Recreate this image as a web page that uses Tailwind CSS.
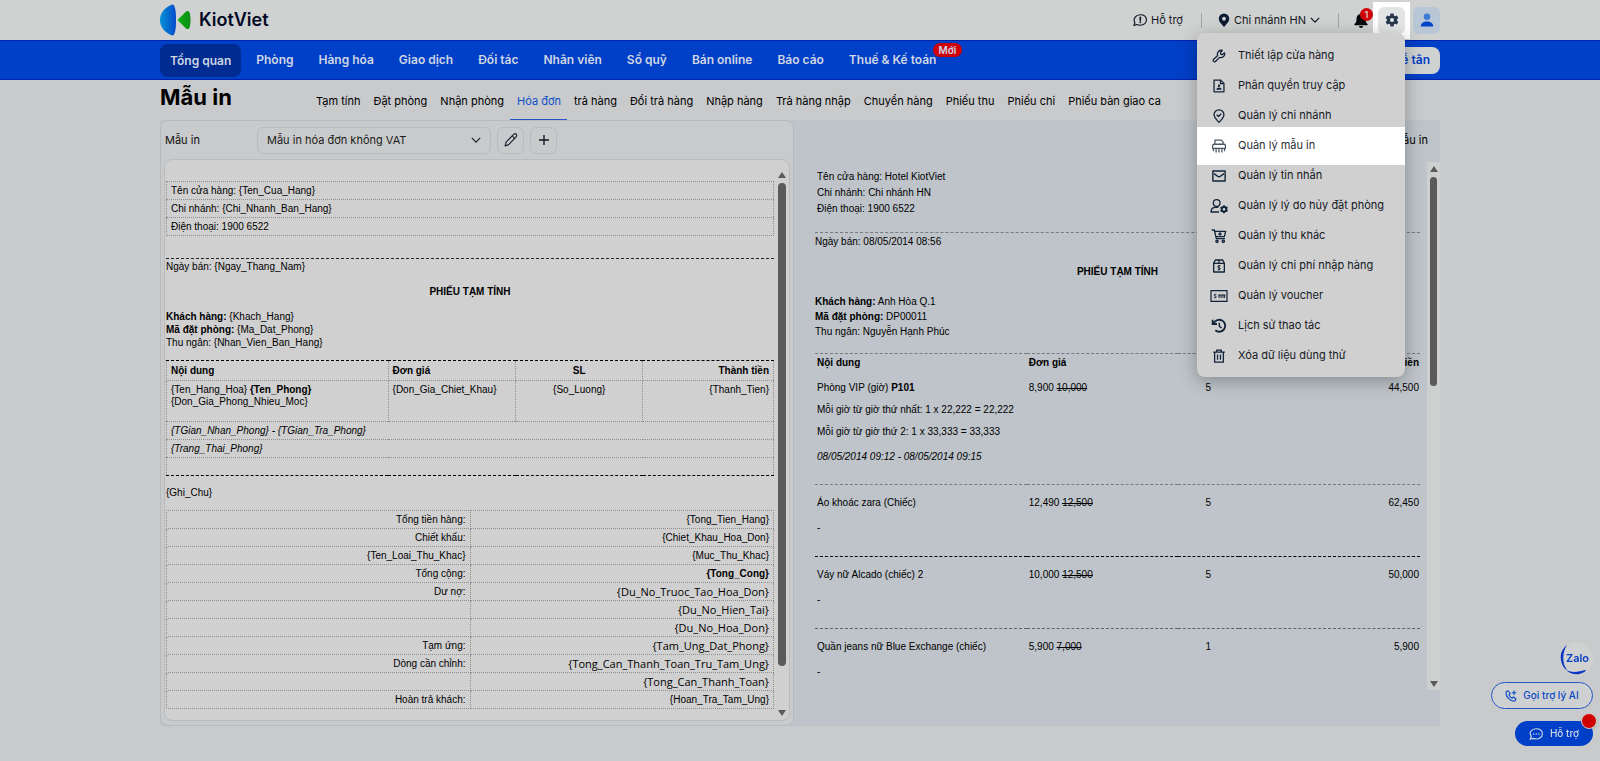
<!DOCTYPE html>
<html lang="vi">
<head>
    <meta charset="UTF-8">
    <meta name="viewport" content="width=device-width, initial-scale=1.0">
    <title>KiotViet - Mẫu in</title>
    <script src="https://cdn.jsdelivr.net/npm/@tailwindcss/browser@4"></script>
</head>
<body class="min-h-screen bg-[#c9cacc] text-black text-[11px] [font-family:Inter,sans-serif]">

    <!-- Header -->
    <header class="bg-[#d0d1d1]">
        <div class="w-4/5 mx-auto h-10 flex items-center justify-between text-[#101822]">
            <a href="#" class="flex items-center gap-[7px] text-lg font-semibold text-[#030a26]">
                <svg class="w-8 h-8" viewBox="0 0 32 32">
                    <defs>
                        <linearGradient id="blue" x1="0" x2="1"><stop offset="0" stop-color="#0793d6"/><stop offset="1" stop-color="#0548cc"/></linearGradient>
                        <linearGradient id="green" x1="0" x2="1"><stop offset="0" stop-color="#0cae12"/><stop offset="1" stop-color="#0b8f14"/></linearGradient>
                    </defs>
                    <path d="M11 1C4 4 0 9.500 0 16s4 12 11 15c2 1 3 0 3.500-1.500C16 26 16 21 16 16s0-10-1.500-13.500C14 1 13 0 11 1z" fill="url(#blue)"/>
                    <path d="M18.500 15L25 8.500c2-2 4-2 4.500 0 .8 2 1 4.500 1 7.500s-.2 5.500-1 7.500c-.5 2-2.500 2-4.500 0L18.500 17c-.7-.7-.7-1.300 0-2z" fill="url(#green)"/>
                </svg>
                KiotViet
            </a>
            <div class="flex items-center">
                <a href="#" class="flex items-center gap-1">
                    <svg class="w-[14px] h-[14px]" viewBox="0 0 24 24" fill="none" stroke="currentColor" stroke-width="2" stroke-linecap="round" stroke-linejoin="round"><path d="M1.500 21.500l1.800-4.500C-.5 9.500 5 3 12.500 3S23 7.500 23 12s-4 9-10.500 9c-2 0-4-.5-5.500-1.300z"/><path d="M12.500 7.500v4.500M12.500 15.500v.5" stroke-width="3"/></svg>
                    Hỗ trợ
                </a>
                <span class="w-px h-[15px] bg-[#a3a5a7] ml-[18px] mr-4"></span>
                <button class="flex items-center gap-1">
                    <svg class="w-3 h-[14px] text-[#0b1b30]" viewBox="2 0 20 24" fill="currentColor" fill-rule="evenodd"><path d="M12 1a9 9 0 0 0-9 9c0 4.500 3.500 8 9 14 5.500-6 9-9.500 9-14a9 9 0 0 0-9-9zm0 5.500a3.300 3.300 0 1 1 0 6.600 3.300 3.300 0 0 1 0-6.600z"/></svg>
                    Chi nhánh HN
                    <svg class="w-[10px] h-[10px]" viewBox="0 0 24 24" fill="none" stroke="currentColor" stroke-width="3"><path d="M2 7l10 10L22 7"/></svg>
                </button>
                <span class="w-px h-[15px] bg-[#a3a5a7] ml-[18px] mr-[15px]"></span>
                <button class="relative" aria-label="Thông báo">
                    <svg class="w-[14px] h-4 text-[#06080c]" viewBox="0 0 14 16" fill="currentColor"><path d="M7 1a1 1 0 0 0-1 1.100C3.700 2.600 2.500 4.500 2.500 7c0 2.500-.5 3.500-2 5-.5.600-.2 1.200.5 1.200h12c.700 0 1-.600.500-1.200-1.500-1.500-2-2.500-2-5 0-2.500-1.200-4.400-3.500-4.900A1 1 0 0 0 7 1zM5 14a2 2 0 0 0 4 0z"/></svg>
                    <span class="absolute -top-1 left-[6px] w-[13px] h-[13px] rounded-full bg-[#cf0008] text-[#e0d0d0] text-[9px] leading-[13px] font-semibold text-center">1</span>
                </button>
                <div class="relative ml-[10px] mr-2">
                    <div class="absolute -inset-[5px] bg-white"></div>
                    <button class="relative w-[27px] h-[27px] rounded-md bg-[#e2e4e5] flex items-center justify-center text-[#26384b]" aria-label="Thiết lập">
                        <svg class="w-[14px] h-[14px]" viewBox="0 0 24 24" fill="currentColor" fill-rule="evenodd"><path d="M9.500 1h5l.7 3.200 2 1.200 3.200-1 2.500 4.300L20.500 11v2l2.400 2.300-2.500 4.300-3.200-1-2 1.200-.7 3.200h-5l-.7-3.200-2-1.200-3.200 1-2.500-4.300L3.500 13v-2L1.100 8.700l2.500-4.300 3.200 1 2-1.200zM12 8.500a3.500 3.500 0 1 0 0 7 3.500 3.500 0 0 0 0-7z"/></svg>
                    </button>

                    <!-- Settings menu -->
                    <div class="absolute z-10 right-0 top-[26px] w-[208px] pt-2 pb-[6px] rounded-lg bg-[#d0d0d0] shadow-[0_4px_18px_rgba(0,0,0,0.3)] text-[#15191f]">
                        <a href="#" class="h-[30px] pl-[14px] flex items-center gap-[11px]">
                            <svg class="w-[14px] h-[14px] mx-px text-[#12233a]" viewBox="0 0 24 24" fill="none" stroke="currentColor" stroke-width="2.200" stroke-linejoin="round"><path d="M21.500 6.500l-3.500 3-3-.5-.5-3 3.200-3.500a6.500 6.500 0 0 0-8 8.500L2.500 18a2.500 2.500 0 0 0 3.500 3.500l7-7.200a6.500 6.500 0 0 0 8.500-7.800z"/></svg>
                            Thiết lập cửa hàng
                        </a>
                        <a href="#" class="h-[30px] pl-[14px] flex items-center gap-[11px]">
                            <svg class="w-[14px] h-[14px] mx-px text-[#12233a]" viewBox="0 0 24 24" fill="none" stroke="currentColor" stroke-width="2.200" stroke-linejoin="round"><path d="M3.500 2h11.500l5.500 5.500V22h-17z"/><path d="M14.500 2.500V8H20"/><circle cx="12" cy="11.500" r="2" fill="currentColor" stroke="none"/><path d="M7.500 18.500c0-5 9-5 9 0z" fill="currentColor" stroke="none"/></svg>
                            Phân quyền truy cập
                        </a>
                        <a href="#" class="h-[30px] pl-[14px] flex items-center gap-[11px]">
                            <svg class="w-[14px] h-[14px] mx-px text-[#12233a]" viewBox="0 0 24 24" fill="none" stroke="currentColor" stroke-width="2.200" stroke-linejoin="round"><path d="M12 23c-5-5.500-8.500-8.500-8.500-13a8.500 8.500 0 0 1 17 0c0 4.500-3.500 7.500-8.500 13z"/><path d="M8 10l3 2.800L16 8"/></svg>
                            Quản lý chi nhánh
                        </a>
                        <a href="#" class="h-[38px] -my-1 pl-[14px] flex items-center gap-[11px] bg-white text-[#2b3038]">
                            <svg class="w-[14px] h-[14px] mx-px text-[#4c5866]" viewBox="0 0 24 24" fill="none" stroke="currentColor" stroke-width="2.200" stroke-linejoin="round"><path d="M5 9V2h11l3 3v4"/><path d="M1 16v-4.500A2.500 2.500 0 0 1 3.500 9h17a2.500 2.500 0 0 1 2.500 2.500V16z"/><path d="M2.500 16v5M7 16v7M12 16v7M17 16v7M21.500 16v5"/></svg>
                            Quản lý mẫu in
                        </a>
                        <a href="#" class="h-[30px] pl-[14px] flex items-center gap-[11px]">
                            <svg class="w-[14px] h-[14px] mx-px text-[#12233a]" viewBox="0 0 24 24" fill="none" stroke="currentColor" stroke-width="2.400" stroke-linejoin="round"><path d="M1.500 3.500h21v17h-21z"/><path d="M3.500 8l6 4.500c1.700 1.300 3.300 1.300 5 0l6-4.500"/></svg>
                            Quản lý tin nhắn
                        </a>
                        <a href="#" class="h-[30px] pl-[14px] flex items-center gap-[11px]">
                            <svg class="w-4 h-4 text-[#12233a] overflow-visible" viewBox="0 0 24 24" fill="none" stroke="currentColor" stroke-width="2" stroke-linejoin="round"><circle cx="8.500" cy="7.500" r="5"/><path d="M12 21H0c0-5 3-7 7-7h4"/><circle cx="19.500" cy="17" r="3.500" stroke-width="3"/><path d="M19.500 11v2M19.500 21v2M14.300 14l1.700 1M23 19l1.700 1M14.300 20l1.700-1M23 15l1.700-1" stroke-width="2.600"/></svg>
                            Quản lý lý do hủy đặt phòng
                        </a>
                        <a href="#" class="h-[30px] pl-[14px] flex items-center gap-[11px]">
                            <svg class="w-4 h-4 text-[#12233a]" viewBox="0 0 24 24" fill="none" stroke="currentColor" stroke-width="2" stroke-linejoin="round"><path d="M1 3h4l3 13h13"/><path d="M5.500 5H22l-2 8H7.500"/><path d="M13.500 6.500v5M11 9h5"/><circle cx="9" cy="20" r="1.700"/><circle cx="18.500" cy="20" r="1.700"/></svg>
                            Quản lý thu khác
                        </a>
                        <a href="#" class="h-[30px] pl-[14px] flex items-center gap-[11px]">
                            <svg class="w-4 h-4 text-[#12233a]" viewBox="0 0 24 24" fill="none" stroke="currentColor" stroke-width="2" stroke-linejoin="round"><path d="M4 8l2.500-5h11L20 8v13H4z"/><path d="M4 8h16M12 3v5"/><path d="M14 11.500h-2.500c-1.800 0-1.800 3 0 3h1c1.800 0 1.800 3 0 3H10M12 10.500v8" stroke-width="1.500"/></svg>
                            Quản lý chi phí nhập hàng
                        </a>
                        <a href="#" class="h-[30px] pl-[14px] flex items-center gap-[11px]">
                            <svg class="w-4 h-4 text-[#12233a] overflow-visible" viewBox="0 0 24 24" fill="none" stroke="currentColor" stroke-width="1.800"><path d="M0 4h24v16H0z"/><path d="M8 9.500H6c-1.600 0-1.600 2.500 0 2.500h.5c1.600 0 1.600 2.500 0 2.500h-2M12 15v-4.500M15 15v-4.500M18 15v-4.500M20.500 15v-4.500M11 10.500h10.500" stroke-width="1.500"/></svg>
                            Quản lý voucher
                        </a>
                        <a href="#" class="h-[30px] pl-[14px] flex items-center gap-[11px]">
                            <svg class="w-4 h-4 text-[#12233a]" viewBox="0 0 24 24" fill="none" stroke="currentColor" stroke-width="2.800"><path d="M4 8a9 9 0 1 1 2.500 10.500"/><path d="M2.500 2.500V9H9"/><path d="M12.500 7v5.500l3.500 2.500" stroke-width="2.200"/></svg>
                            Lịch sử thao tác
                        </a>
                        <a href="#" class="h-[30px] pl-[14px] flex items-center gap-[11px]">
                            <svg class="w-[14px] h-[14px] mx-px text-[#12233a]" viewBox="0 0 24 24" fill="none" stroke="currentColor" stroke-width="2.200" stroke-linejoin="round"><path d="M2 5.500h20M8 5.500V2h8v3.500M4.500 5.500V22.500h15V5.500M9.500 9.500v9M14.500 9.500v9"/></svg>
                            Xóa dữ liệu dùng thử
                        </a>
                    </div>
                </div>
                <button class="w-[27px] h-[27px] rounded-md bg-[#b9c6d6] flex items-center justify-center" aria-label="Tài khoản">
                    <svg class="w-[14px] h-[14px]" viewBox="0 0 24 24"><circle cx="12" cy="6.500" r="5.500" fill="#3c7bd2"/><path d="M1.500 23c-1-11 22-11 21 0z" fill="#0343c9"/></svg>
                </button>
            </div>
        </div>
    </header>

    <!-- Main navigation -->
    <nav class="bg-[#003fc7] border-y border-[#0022ab]">
        <div class="w-4/5 mx-auto h-[38px] flex items-center justify-between text-[#cfd6e4] text-xs font-semibold">
            <div class="flex items-center gap-[5px]">
                <a href="#" class="px-[10px] h-[33px] leading-[33px] rounded-lg bg-[#002b91]">Tổng quan</a>
                <a href="#" class="px-[10px]">Phòng</a>
                <a href="#" class="px-[10px]">Hàng hóa</a>
                <a href="#" class="px-[10px]">Giao dịch</a>
                <a href="#" class="px-[10px]">Đối tác</a>
                <a href="#" class="px-[10px]">Nhân viên</a>
                <a href="#" class="px-[10px]">Sổ quỹ</a>
                <a href="#" class="px-[10px]">Bán online</a>
                <a href="#" class="px-[10px]">Báo cáo</a>
                <a href="#" class="relative px-[10px]">Thuế &amp; Kế toán
                    <span class="absolute -top-[9px] -right-4 px-[6px] rounded-full bg-[#cf0008] text-[10px] leading-[14px]">Mới</span>
                </a>
            </div>
            <button class="h-[27px] px-[10px] rounded-lg bg-[#d0d1d1] text-[#003fc7]">Lễ tân</button>
        </div>
    </nav>

    <main class="w-4/5 mx-auto">
        <div class="h-10 flex items-start">
            <h1 class="w-[149px] text-[22px] leading-[34px] font-bold">Mẫu in</h1>
            <div class="flex h-[41px] leading-[42px]">
                <a href="#" class="pl-[7px] pr-[6px]">Tạm tính</a>
                <a href="#" class="pl-[7px] pr-[6px]">Đặt phòng</a>
                <a href="#" class="pl-[7px] pr-[6px]">Nhận phòng</a>
                <a href="#" class="pl-[7px] pr-[6px] text-[#0b4fc8] border-b-2 border-[#2b50c8]">Hóa đơn</a>
                <a href="#" class="pl-[7px] pr-[6px]">trả hàng</a>
                <a href="#" class="pl-[7px] pr-[6px]">Đổi trả hàng</a>
                <a href="#" class="pl-[7px] pr-[6px]">Nhập hàng</a>
                <a href="#" class="pl-[7px] pr-[6px]">Trả hàng nhập</a>
                <a href="#" class="pl-[7px] pr-[6px]">Chuyển hàng</a>
                <a href="#" class="pl-[7px] pr-[6px]">Phiếu thu</a>
                <a href="#" class="pl-[7px] pr-[6px]">Phiếu chi</a>
                <a href="#" class="pl-[7px] pr-[6px]">Phiếu bàn giao ca</a>
            </div>
        </div>

        <div class="flex bg-[#bec4c9]">
            <!-- Template editor -->
            <section class="w-[634px] shrink-0 px-[3px] pb-1 rounded-lg border border-[#b7babc] bg-[#c9cacb]">
                <div class="h-[38px] pl-px flex items-center">
                    <label for="template" class="w-[92px] text-[#101010]">Mẫu in</label>
                    <div class="relative">
                        <select id="template" class="appearance-none w-[234px] h-[27px] pl-[9px] rounded-md border border-[#b9bbbd] text-[#1b1d20]">
                            <option>Mẫu in hóa đơn không VAT</option>
                        </select>
                        <svg class="absolute right-[10px] top-2 w-[10px] h-[10px] pointer-events-none" viewBox="0 0 24 24" fill="none" stroke="#1b2430" stroke-width="3"><path d="M2 7l10 10L22 7"/></svg>
                    </div>
                    <button class="ml-[6px] w-[27px] h-[27px] rounded-md border border-[#b9bbbd] flex items-center justify-center" aria-label="Sửa">
                        <svg class="w-[14px] h-[14px]" viewBox="0 0 24 24" fill="none" stroke="#1b2430" stroke-width="2" stroke-linejoin="round"><path d="M2 22l1.500-6.500L17 2c1.500-1.200 3-.8 4 .2s1.200 2.800 0 4L8 20z"/><path d="M14 5l5 5"/></svg>
                    </button>
                    <button class="ml-[6px] w-[27px] h-[27px] rounded-md border border-[#b9bbbd] flex items-center justify-center" aria-label="Thêm">
                        <svg class="w-[10px] h-[10px]" viewBox="0 0 24 24" fill="none" stroke="#0c1420" stroke-width="3.200"><path d="M12 0v24M0 12h24"/></svg>
                    </button>
                </div>

                <div class="flex rounded-lg border border-[#b9bbbd] bg-[#d0d0d0] [font-family:'Liberation_Sans',Arial,sans-serif] text-[10px] leading-3">
                    <div class="flex-1 pt-[21px] px-px pb-[11px]">
                        <table class="w-full border-collapse border border-dotted border-[#8f8f8f]">
                            <tr class="h-[18px] border-b border-dotted border-[#8f8f8f]"><td class="px-1">Tên cửa hàng: {Ten_Cua_Hang}</td></tr>
                            <tr class="h-[18px] border-b border-dotted border-[#8f8f8f]"><td class="px-1">Chi nhánh: {Chi_Nhanh_Ban_Hang}</td></tr>
                            <tr class="h-[18px]"><td class="px-1">Điện thoại: 1900 6522</td></tr>
                        </table>
                        <div class="mt-[22px] pt-[2px] border-t border-dashed border-[#222]">Ngày bán: {Ngay_Thang_Nam}</div>
                        <div class="mt-[13px] mb-3 text-center font-bold">PHIẾU TẠM TÍNH</div>
                        <div class="leading-[13px]">
                            <p><b>Khách hàng:</b> {Khach_Hang}</p>
                            <p><b>Mã đặt phòng:</b> {Ma_Dat_Phong}</p>
                            <p>Thu ngân: {Nhan_Vien_Ban_Hang}</p>
                        </div>

                        <table class="mt-[11px] w-full table-fixed border-collapse border border-dotted border-[#8f8f8f]">
                            <tr class="h-[20px] border-t border-t-black border-dashed">
                                <th class="w-[36.5%] px-1 text-left border-b border-r border-dotted border-[#8f8f8f]">Nội dung</th>
                                <th class="w-[21%] px-1 text-left border-b border-r border-dotted border-[#8f8f8f]">Đơn giá</th>
                                <th class="w-[21%] px-1 border-b border-r border-dotted border-[#8f8f8f]">SL</th>
                                <th class="px-1 text-right border-b border-dotted border-[#8f8f8f]">Thành tiền</th>
                            </tr>
                            <tr class="h-[41px] align-top border-b border-dotted border-[#8f8f8f]">
                                <td class="px-1 pt-[3px] border-r border-dotted border-[#8f8f8f]">{Ten_Hang_Hoa} <b>{Ten_Phong}</b><br>{Don_Gia_Phong_Nhieu_Moc}</td>
                                <td class="px-1 pt-[3px] border-r border-dotted border-[#8f8f8f]">{Don_Gia_Chiet_Khau}</td>
                                <td class="px-1 pt-[3px] text-center border-r border-dotted border-[#8f8f8f]">{So_Luong}</td>
                                <td class="px-1 pt-[3px] text-right">{Thanh_Tien}</td>
                            </tr>
                            <tr class="h-[18px] border-b border-dotted border-[#8f8f8f]"><td colspan="4" class="px-1 italic">{TGian_Nhan_Phong} - {TGian_Tra_Phong}</td></tr>
                            <tr class="h-[18px] border-b border-dotted border-[#8f8f8f]"><td colspan="4" class="px-1 italic">{Trang_Thai_Phong}</td></tr>
                            <tr class="h-[18px]"><td colspan="4" class="border-b border-dashed border-black"></td></tr>
                        </table>
                        <p class="my-[11px]">{Ghi_Chu}</p>

                        <table class="w-full table-fixed border-collapse text-right">
                            <tr class="h-[18px]"><td class="px-1 border border-dotted border-[#8f8f8f]">Tổng tiền hàng:</td><td class="px-1 border border-dotted border-[#8f8f8f]">{Tong_Tien_Hang}</td></tr>
                            <tr class="h-[18px]"><td class="px-1 border border-dotted border-[#8f8f8f]">Chiết khấu:</td><td class="px-1 border border-dotted border-[#8f8f8f]">{Chiet_Khau_Hoa_Don}</td></tr>
                            <tr class="h-[18px]"><td class="px-1 border border-dotted border-[#8f8f8f]">{Ten_Loai_Thu_Khac}</td><td class="px-1 border border-dotted border-[#8f8f8f]">{Muc_Thu_Khac}</td></tr>
                            <tr class="h-[18px]"><td class="px-1 border border-dotted border-[#8f8f8f]">Tổng cộng:</td><td class="px-1 border border-dotted border-[#8f8f8f] font-bold">{Tong_Cong}</td></tr>
                            <tr class="h-[18px]"><td class="px-1 border border-dotted border-[#8f8f8f]">Dư nợ:</td><td class="px-1 border border-dotted border-[#8f8f8f] text-[11px] [font-family:'Open_Sans',sans-serif]">{Du_No_Truoc_Tao_Hoa_Don}</td></tr>
                            <tr class="h-[18px]"><td class="px-1 border border-dotted border-[#8f8f8f]"></td><td class="px-1 border border-dotted border-[#8f8f8f] text-[11px] [font-family:'Open_Sans',sans-serif]">{Du_No_Hien_Tai}</td></tr>
                            <tr class="h-[18px]"><td class="px-1 border border-dotted border-[#8f8f8f]"></td><td class="px-1 border border-dotted border-[#8f8f8f] text-[11px] [font-family:'Open_Sans',sans-serif]">{Du_No_Hoa_Don}</td></tr>
                            <tr class="h-[18px]"><td class="px-1 border border-dotted border-[#8f8f8f]">Tạm ứng:</td><td class="px-1 border border-dotted border-[#8f8f8f] text-[11px] [font-family:'Open_Sans',sans-serif]">{Tam_Ung_Dat_Phong}</td></tr>
                            <tr class="h-[18px]"><td class="px-1 border border-dotted border-[#8f8f8f]">Dòng cần chỉnh:</td><td class="px-1 border border-dotted border-[#8f8f8f] text-[11px] [font-family:'Open_Sans',sans-serif]">{Tong_Can_Thanh_Toan_Tru_Tam_Ung}</td></tr>
                            <tr class="h-[18px]"><td class="px-1 border border-dotted border-[#8f8f8f]"></td><td class="px-1 border border-dotted border-[#8f8f8f] text-[11px] [font-family:'Open_Sans',sans-serif]">{Tong_Can_Thanh_Toan}</td></tr>
                            <tr class="h-[18px]"><td class="px-1 border border-dotted border-[#8f8f8f]">Hoàn trả khách:</td><td class="px-1 border border-dotted border-[#8f8f8f]">{Hoan_Tra_Tam_Ung}</td></tr>
                        </table>
                    </div>
                    <!-- Scrollbar -->
                    <div class="w-[14px] pt-3 pb-1 flex flex-col items-center text-[#5a5a5a]">
                        <svg class="w-2 h-[6px]" viewBox="0 0 8 6" fill="currentColor"><path d="M4 0l4 6H0z"/></svg>
                        <div class="mt-[5px] mb-[44px] w-2 flex-1 rounded-full bg-[#5a5a5a]"></div>
                        <svg class="w-2 h-[6px]" viewBox="0 0 8 6" fill="currentColor"><path d="M4 6l4-6H0z"/></svg>
                    </div>
                </div>
            </section>

            <!-- Preview -->
            <section class="flex-1">
                <div class="h-[42px] pr-3 pb-[2px] flex items-center justify-end">Mẫu in</div>
                <div class="h-[528px] overflow-hidden flex [font-family:'Liberation_Sans',Arial,sans-serif] text-[10px] leading-[15px]">
                    <div class="flex-1 pt-[7px] pl-[21px] pr-[7px]">
                        <div class="pl-[2px] pb-[15px] leading-4 border-b border-dashed border-[#777b7e]">
                            <p>Tên cửa hàng: Hotel KiotViet</p>
                            <p>Chi nhánh: Chi nhánh HN</p>
                            <p>Điện thoại: 1900 6522</p>
                        </div>
                        <p class="mt-px">Ngày bán: 08/05/2014 08:56</p>
                        <p class="my-[15px] text-center font-bold">PHIẾU TẠM TÍNH</p>
                        <p><b>Khách hàng:</b> Anh Hòa Q.1</p>
                        <p><b>Mã đặt phòng:</b> DP00011</p>
                        <p>Thu ngân: Nguyễn Hạnh Phúc</p>
                        <table class="mt-[14px] w-full table-fixed border-collapse leading-[22px]">
                            <tr class="leading-[18px] border-t border-dashed border-[#777b7e]">
                                <th class="w-[35%] pl-[2px] text-left">Nội dung</th>
                                <th class="w-[25%] pl-[2px] text-left">Đơn giá</th>
                                <th class="w-[10%]">SL</th>
                                <th class="pr-px text-right">Thành tiền</th>
                            </tr>
                            <tr>
                                <td class="pt-[5px] pl-[2px]">Phòng VIP (giờ) <b>P101</b></td>
                                <td class="pt-[5px] pl-[2px]">8,900 <s>10,000</s></td>
                                <td class="pt-[5px] text-center">5</td>
                                <td class="pt-[5px] pr-px text-right">44,500</td>
                            </tr>
                            <tr><td colspan="4" class="pl-[2px]">Mỗi giờ từ giờ thứ nhất: 1 x 22,222 = 22,222</td></tr>
                            <tr><td colspan="4" class="pl-[2px]">Mỗi giờ từ giờ thứ 2: 1 x 33,333 = 33,333</td></tr>
                            <tr class="border-b border-dashed border-[#777b7e]"><td colspan="4" class="pt-[3px] pl-[2px] pb-4 italic">08/05/2014 09:12 - 08/05/2014 09:15</td></tr>
                            <tr>
                                <td class="pt-[7px] pl-[2px]">Áo khoác zara (Chiếc)</td>
                                <td class="pt-[7px] pl-[2px]">12,490 <s>12,500</s></td>
                                <td class="pt-[7px] text-center">5</td>
                                <td class="pt-[7px] pr-px text-right">62,450</td>
                            </tr>
                            <tr class="border-b border-dashed border-black"><td colspan="4" class="pt-[3px] pl-[2px] pb-[17px]">-</td></tr>
                            <tr>
                                <td class="pt-[7px] pl-[2px]">Váy nữ Alcado (chiếc) 2</td>
                                <td class="pt-[7px] pl-[2px]">10,000 <s>12,500</s></td>
                                <td class="pt-[7px] text-center">5</td>
                                <td class="pt-[7px] pr-px text-right">50,000</td>
                            </tr>
                            <tr class="border-b border-dashed border-[#5f6366]"><td colspan="4" class="pt-[3px] pl-[2px] pb-[17px]">-</td></tr>
                            <tr>
                                <td class="pt-[7px] pl-[2px]">Quần jeans nữ Blue Exchange (chiếc)</td>
                                <td class="pt-[7px] pl-[2px]">5,900 <s>7,000</s></td>
                                <td class="pt-[7px] text-center">1</td>
                                <td class="pt-[7px] pr-px text-right">5,900</td>
                            </tr>
                            <tr><td colspan="4" class="pt-[3px] pl-[2px]">-</td></tr>
                        </table>
                    </div>
                    <!-- Scrollbar -->
                    <div class="w-[13px] pt-1 pb-[3px] flex flex-col items-center bg-[#cecfcf] text-[#5a5a5a]">
                        <svg class="w-2 h-[6px]" viewBox="0 0 8 6" fill="currentColor"><path d="M4 0l4 6H0z"/></svg>
                        <div class="mt-[5px] mb-auto w-[7px] h-[209px] rounded-full bg-[#5a5a5a]"></div>
                        <svg class="w-2 h-[6px]" viewBox="0 0 8 6" fill="currentColor"><path d="M4 6l4-6H0z"/></svg>
                    </div>
                </div>
            </section>
        </div>
    </main>

    <!-- Floating support buttons -->
    <div class="fixed right-[7px] bottom-[15px] flex flex-col items-end">
        <button class="relative w-[33px] h-[33px] rounded-full bg-[#d0d1d1] text-[#0a41c4] text-[11px] font-semibold">
            <svg class="absolute inset-0 w-full h-full" viewBox="0 0 33 33" fill="#0a35c0"><path d="M7 3C-1 9-1 20 5 27l2 1C2 21 2 11 7 3z"/><path d="M6 28c6 3 13 2 19 0 1 .3 1 .8 0 1.500-6 4-13 4-19-1.500z"/></svg>
            <span class="relative pl-[2px]">Zalo</span>
        </button>
        <button class="mt-[7px] w-[102px] h-[27px] rounded-full border border-[#2457c6] bg-[#cfd0d2] text-[#0a49c4] text-[10px] font-medium flex items-center justify-center gap-[6px]">
            <svg class="w-3 h-3" viewBox="0 0 24 24" fill="none" stroke="currentColor" stroke-width="2.200" stroke-linejoin="round"><path d="M6 1.500L2 4c-1 9 8 19 17.500 18.500L22 18l-5-4-3 2.500c-3-1.500-5-4-6-7L10.500 7z"/><path d="M18 1v9M13.500 5.500h9"/></svg>
            Gọi trợ lý AI
        </button>
        <button class="relative mt-3 w-[78px] h-[25px] rounded-full bg-[#003fc7] text-[#cfd6e4] text-[10px] font-medium flex items-center justify-center gap-[7px]">
            <svg class="w-[14px] h-[14px]" viewBox="0 0 24 24" fill="none" stroke="currentColor" stroke-width="2" stroke-linejoin="round"><path d="M2 21l2-5C-1 9 5 3 12 3s11 4 11 9-7 11-15 7.500z"/><path d="M7 12h2M11.500 12h2M16 12h2" stroke-width="2.500"/></svg>
            Hỗ trợ
            <span class="absolute -top-2 -right-1 w-4 h-4 rounded-full bg-[#d00000] border border-[#d0d0d0] shadow"></span>
        </button>
    </div>
</body>
</html>
